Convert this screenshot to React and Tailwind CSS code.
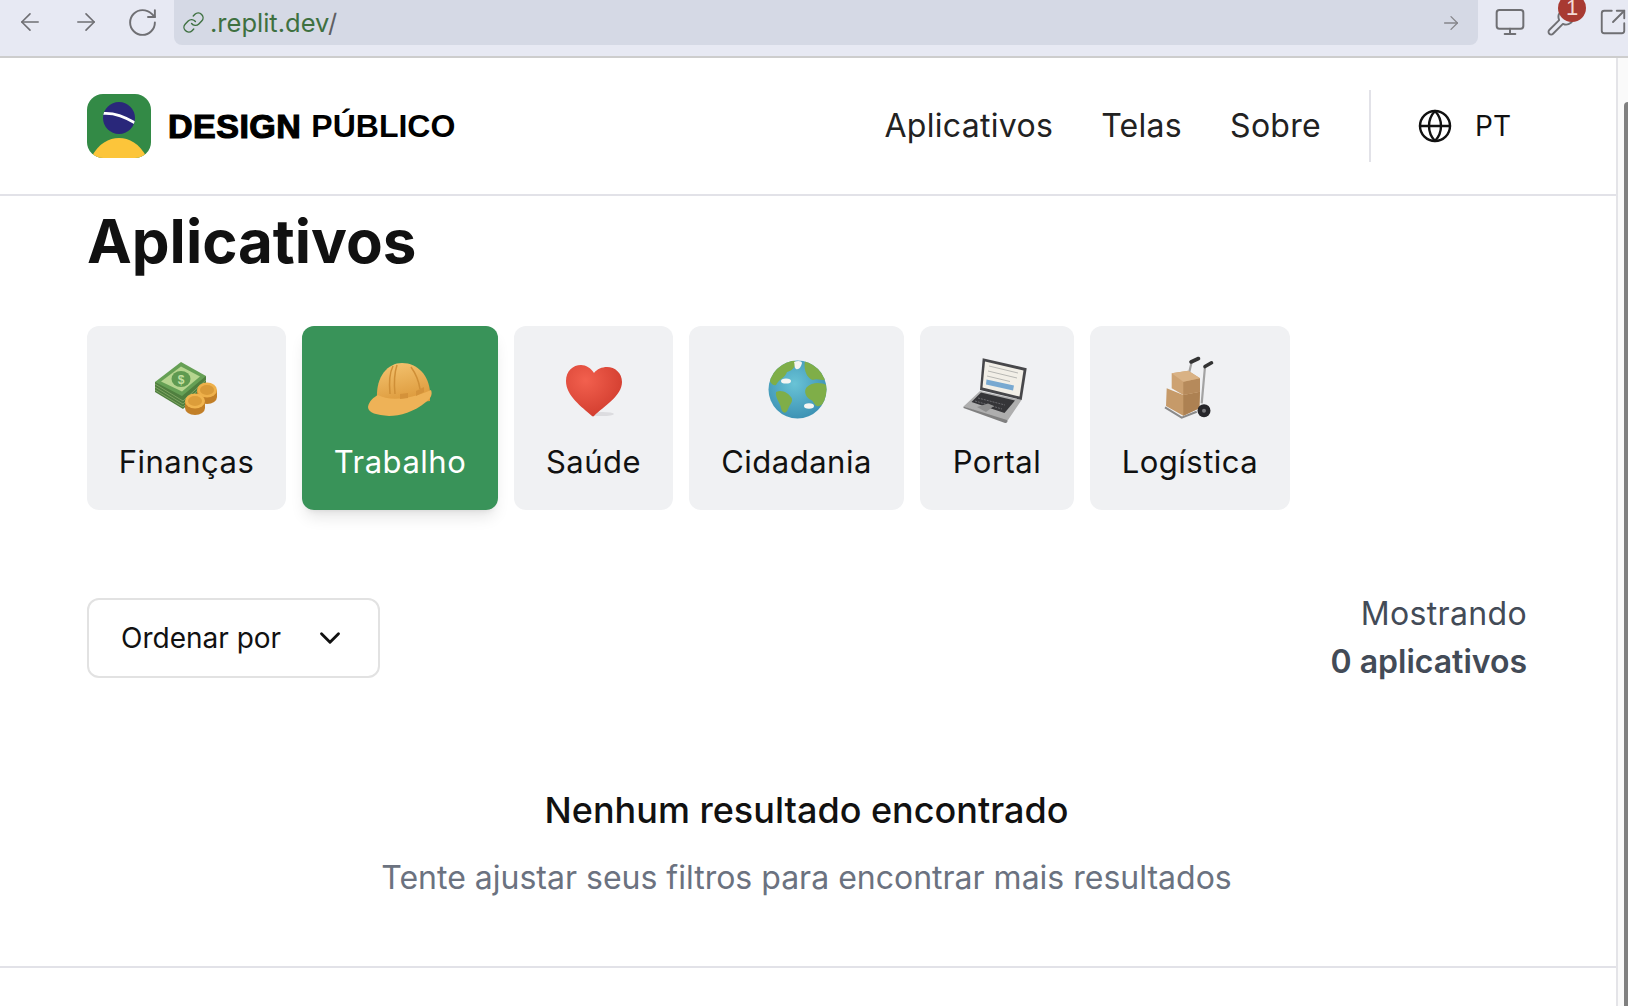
import { ArrowLeft, ArrowRight, RotateCw, Link, Monitor, Wrench, SquareArrowOutUpRight, Globe, ChevronDown } from "lucide-react";

const inter = "font-['Inter',sans-serif]";

function BrazilLogo() {
  return (
    <svg width="64" height="64" viewBox="0 0 64 64" className="shrink-0">
      <defs>
        <clipPath id="logoClip">
          <rect width="64" height="64" rx="16" />
        </clipPath>
        <clipPath id="ballClip">
          <circle cx="32" cy="24" r="16" />
        </clipPath>
      </defs>
      <g clipPath="url(#logoClip)">
        <rect width="64" height="64" fill="#338a46" />
        <circle cx="32" cy="24" r="16" fill="#29277a" />
        <path d="M15 19.5 C24 18.5 37 22 49 29.5" stroke="#fff" strokeWidth="2.8" fill="none" clipPath="url(#ballClip)" />
        <path d="M2 68 C10 50 21 44 32 44 C43 44 54 50 62 68 Z" fill="#fcc53a" />
      </g>
    </svg>
  );
}

function MoneyIcon() {
  return (
    <svg width="72" height="72" viewBox="0 0 72 72">
      <path d="M4 28 L4 38 L32 55 L55 34 L55 22 Z" fill="#4f7f3f" />
      <path d="M4 30 L32 47 L55 26 M4 33 L32 50 L55 29 M4 36 L32 53 L55 32" stroke="#7ea262" strokeWidth="1" fill="none" />
      <path d="M30 8 L55 22 L31 42 L4 28 Z" fill="#66a055" />
      <path d="M30 12.5 L49 22.5 L31 37.5 L10 27.5 Z" fill="#b6d58f" />
      <ellipse cx="30" cy="25" rx="9.5" ry="8" fill="#5f9a50" />
      <text x="30" y="29.5" fontSize="12" fontWeight="700" textAnchor="middle" fill="#c5e0a2" fontFamily="Liberation Sans, sans-serif">$</text>
      <path d="M46 36 v7 a10 7 0 0 0 20 0 v-7 Z" fill="#c27f27" />
      <ellipse cx="56" cy="36" rx="10" ry="7.5" fill="#eeb04a" />
      <ellipse cx="56" cy="36" rx="7" ry="5" fill="#d99a38" />
      <path d="M34 47 v7 a10 7 0 0 0 20 0 v-7 Z" fill="#c27f27" />
      <ellipse cx="44" cy="47" rx="10" ry="7.5" fill="#f0b44e" />
      <ellipse cx="44" cy="47" rx="7" ry="5" fill="#dc9d3a" />
    </svg>
  );
}

function HelmetIcon() {
  return (
    <svg width="72" height="72" viewBox="0 0 72 72">
      <defs>
        <linearGradient id="helmetDome" x1="0" y1="0" x2="0.3" y2="1">
          <stop offset="0" stopColor="#f5c572" />
          <stop offset="1" stopColor="#dd9a3c" />
        </linearGradient>
      </defs>
      <path d="M13 44 C12 22 24 9 38 9 C54 9 65 22 66 38 L66 47 L40 50 Z" fill="url(#helmetDome)" />
      <path d="M4 53 C5 47 10 43 14 41 C24 47 46 46 67 36 C69 41 66 45 62 48 C50 58 36 62 25 62 C13 61 4 59 4 53 Z" fill="#eeb257" />
      <path d="M29 12 C25 20 25 30 26 40 M33 11 C30 20 30 30 31 40 M47 13 C52 20 55 28 56 35" stroke="#cf8f37" strokeWidth="1.5" fill="none" />
      <path d="M36 40 L44 39 L44 44 L36 45 Z M52 37 L60 33 L60 38 L52 42 Z" fill="#d4923a" />
    </svg>
  );
}

function HeartIcon() {
  return (
    <svg width="72" height="72" viewBox="0 0 72 72">
      <defs>
        <radialGradient id="heartFill" cx="0.35" cy="0.3" r="0.8">
          <stop offset="0" stopColor="#f2604e" />
          <stop offset="1" stopColor="#cf3a2c" />
        </radialGradient>
      </defs>
      <ellipse cx="44" cy="60" rx="12" ry="2" fill="#dcdcdf" />
      <path d="M34 62 C24 53 8 42 8 27 C8 17 15 11 23 11 C28 11 33 14 36 19 C39 15 44 13 49 13 C57 13 64 19 64 28 C64 42 46 52 36 62 C35.5 62.5 34.5 62.5 34 62 Z" fill="url(#heartFill)" />
    </svg>
  );
}

function GlobeIcon() {
  return (
    <svg width="72" height="72" viewBox="0 0 72 72">
      <defs>
        <radialGradient id="sea" cx="0.45" cy="0.4" r="0.65">
          <stop offset="0" stopColor="#69c3d6" />
          <stop offset="1" stopColor="#3a8fb2" />
        </radialGradient>
        <clipPath id="globeClip">
          <circle cx="36.5" cy="35.5" r="29" />
        </clipPath>
      </defs>
      <circle cx="36.5" cy="35.5" r="29" fill="url(#sea)" />
      <g clipPath="url(#globeClip)">
        <path d="M8 24 C12 10 24 5 34 7 C36 12 31 17 26 18 C24 24 18 25 15 31 C12 32 9 29 8 24 Z" fill="#7fae48" />
        <path d="M15 38 C21 35 27 39 30 43 C33 47 29 50 27 55 C25 61 21 59 20 54 C19 48 14 44 15 38 Z" fill="#7fae48" />
        <path d="M44 7 C54 8 62 16 67 26 C61 27 56 24 52 26 C47 25 42 17 44 7 Z" fill="#7fae48" />
        <path d="M46 33 C51 28 61 28 67 32 C67 42 65 50 58 52 C54 54 53 47 50 46 C45 44 42 37 46 33 Z" fill="#7fae48" />
      </g>
      <path d="M33 8 C37 6 41 7 41 9 C40 13 38 16 35 15 C33 13 34 11 33 8 Z" fill="#f5f5f2" />
      <ellipse cx="25" cy="27" rx="5" ry="2.6" fill="#f5f5f2" />
      <ellipse cx="48" cy="52" rx="5" ry="2.8" fill="#f5f5f2" />
    </svg>
  );
}

function LaptopIcon() {
  return (
    <svg width="72" height="72" viewBox="0 0 72 72">
      <path d="M2.5 52.5 L19 37 L60.5 46 L46 67.5 C45 68.5 44 68 43 67.5 Z" fill="#aeaeae" />
      <path d="M2.5 52.5 L2.5 54 L44 69 C45 69 46 68.5 46.5 67.5 L46 66 Z" fill="#808080" />
      <path d="M21.7 4.3 L65.7 14.3 L60.7 46 L19 36 Z" fill="#47474a" />
      <path d="M24 7.5 L62.5 16.5 L58.5 42.5 L21.5 33.5 Z" fill="#f2efe7" />
      <path d="M28 12 L57 19 M27 17 L56 24 M26 22 L49 27.5" stroke="#b8b8b4" strokeWidth="1" fill="none" />
      <path d="M25.5 25.5 L53 31.5 L52 36.5 L25 30.5 Z" fill="#78a9d1" />
      <path d="M20 38.5 L54 46.5 L43.5 59 L10.5 48 Z" fill="#353538" />
      <path d="M17 44 L44 51 M14 47 L41 55" stroke="#77777b" strokeWidth="0.8" strokeDasharray="2 1" fill="none" />
      <path d="M16 53 L27 49.5 L33 52 L25 58 Z" fill="#8f8f8f" />
    </svg>
  );
}

function TrolleyIcon() {
  return (
    <svg width="72" height="72" viewBox="0 0 72 72">
      <path d="M51 12.7 L47.7 49.3 M37.7 7.7 L35.3 18" stroke="#a3a3a3" strokeWidth="2.2" fill="none" />
      <path d="M37 8 L44.5 4.5 M51 12.5 L57.5 8.8" stroke="#333" strokeWidth="3.6" strokeLinecap="round" fill="none" />
      <path d="M11 53.3 L27.7 63.7 L42.7 57.7" stroke="#8a8a8a" strokeWidth="2" fill="none" />
      <path d="M12.7 34.3 L29.3 41 L46 37.7 L45.3 54.3 L29.3 61.7 L12 52 Z" fill="#c69a69" />
      <path d="M29.3 41 L46 37.7 L45.3 54.3 L29.3 61.7 Z" fill="#ad8152" />
      <path d="M17.7 19.3 L34.3 16.7 L46 24.3 L46 37.7 L29.3 41 L17.7 34.3 Z" fill="#cda272" />
      <path d="M29.3 27.7 L46 24.3 L46 37.7 L29.3 41 Z" fill="#b68a5b" />
      <path d="M17.7 19.3 L34.3 16.7 L46 24.3 L29.3 27.7 Z" fill="#d9b285" />
      <circle cx="50" cy="56.7" r="6.5" fill="#26262a" />
      <circle cx="50" cy="56.7" r="2" fill="#77777a" />
    </svg>
  );
}

const categories = [
  { label: "Finanças", icon: <MoneyIcon />, width: "w-[199px]" },
  { label: "Trabalho", icon: <HelmetIcon />, width: "w-[196px]", active: true },
  { label: "Saúde", icon: <HeartIcon />, width: "w-[159px]" },
  { label: "Cidadania", icon: <GlobeIcon />, width: "w-[215px]" },
  { label: "Portal", icon: <LaptopIcon />, width: "w-[154px]" },
  { label: "Logística", icon: <TrolleyIcon />, width: "w-[200px]" },
];

function BrowserBar() {
  return (
    <div className="relative flex h-[58px] items-start border-b-2 border-[#cdcdcd] bg-[#e7e9f3] text-[#6f6f73]">
      <div className="flex h-[44px] w-[174px] shrink-0 items-center pl-[16px]">
        <ArrowLeft size={28} strokeWidth={1.4} />
        <ArrowRight size={28} strokeWidth={1.4} className="ml-[28px]" />
        <RotateCw size={33} strokeWidth={1.4} className="ml-[26px]" />
      </div>
      <div className="flex h-[45px] flex-1 items-center rounded-b-[8px] bg-[#d5d9e5] pl-[8px] pr-[16px]">
        <Link size={23} strokeWidth={1.5} className="text-[#3e7040]" />
        <span className={`${inter} ml-[5px] text-[25.5px] leading-none text-[#3e7040]`}>
          .replit.dev<span className="text-[#5f5f63]">/</span>
        </span>
        <ArrowRight size={22} strokeWidth={1.4} className="ml-auto text-[#85858a]" />
      </div>
      <div className="flex h-[44px] w-[150px] shrink-0 items-center pl-[16px]">
        <Monitor size={32} strokeWidth={1.5} />
        <Wrench size={30} strokeWidth={1.5} className="ml-[20px]" />
        <SquareArrowOutUpRight size={30} strokeWidth={1.5} className="ml-[22px]" />
      </div>
      {/* extension badge */}
      <div className="absolute left-[1558px] top-[-6px] flex h-[28px] w-[28px] items-center justify-center rounded-full bg-[#a83a32] text-[22px] leading-none text-[#f3d9d5] font-['Liberation_Sans',sans-serif]">
        1
      </div>
    </div>
  );
}

function Header() {
  return (
    <header className="flex h-[138px] shrink-0 items-center border-b-2 border-[#e2e2e8] pl-[87px] pr-[90px]">
      <BrazilLogo />
      <span className="ml-[17px] font-['Liberation_Sans',sans-serif] text-[34px] font-bold leading-none tracking-[0.5px] text-black [-webkit-text-stroke:1.2px_#000]">
        DESIGN
      </span>
      <span className="ml-[10px] font-['Liberation_Sans',sans-serif] text-[32px] font-bold leading-none text-black">
        PÚBLICO
      </span>
      <nav className={`${inter} ml-auto flex items-center gap-[48px] text-[32px] tracking-[0.3px] text-[#222]`}>
        <span>Aplicativos</span>
        <span>Telas</span>
        <span>Sobre</span>
      </nav>
      <div className="ml-[48px] h-[72px] w-[2px] bg-[#e2e2e8]" />
      <Globe size={36} strokeWidth={1.6} className="ml-[46px] text-[#111]" />
      <span className={`${inter} ml-[22px] mr-[15px] text-[28px] text-[#111]`}>PT</span>
    </header>
  );
}

export default function App() {
  return (
    <div className={`${inter} flex h-screen flex-col overflow-hidden bg-white`}>
      <BrowserBar />
      <div className="flex min-h-0 flex-1">
        <div className="flex min-w-0 flex-1 flex-col">
          <Header />
          <main className="pl-[87px] pr-[89px] pt-[13px]">
            <h1 className="text-[60px] font-bold leading-[64px] text-[#111]">Aplicativos</h1>

            <div className="mt-[53px] flex gap-[16px]">
              {categories.map((c) => (
                <div
                  key={c.label}
                  className={`${c.width} ${
                    c.active
                      ? "flex h-[184px] flex-col items-center rounded-[12px] bg-[#399359] pt-[28px] text-white shadow-lg"
                      : "flex h-[184px] flex-col items-center rounded-[12px] bg-[#f0f1f3] pt-[28px] text-[#111]"
                  }`}
                >
                  {c.icon}
                  <span className="mt-[16px] text-[31px] leading-[40px] tracking-[0.5px]">{c.label}</span>
                </div>
              ))}
            </div>

            <div className="mt-[80px] flex items-center justify-between">
              <button className="flex h-[80px] w-[293px] items-center justify-between rounded-[12px] border-2 border-[#e2e2e2] bg-white pl-[32px] pr-[31px] text-[28px] text-[#111]">
                Ordenar por
                <ChevronDown size={34} strokeWidth={2} />
              </button>
              <div className="text-right text-[32px] leading-[48px] text-[#434b57]">
                <div className="tracking-[0.35px]">Mostrando</div>
                <div className="font-semibold">0 aplicativos</div>
              </div>
            </div>

            <div className="mt-[96px] flex flex-col items-center pr-[1px]">
              <h2 className="text-[36px] font-medium leading-[56px] text-[#111]">Nenhum resultado encontrado</h2>
              <p className="mt-[12px] text-[32px] leading-[56px] text-[#6b7280]">
                Tente ajustar seus filtros para encontrar mais resultados
              </p>
            </div>
          </main>
          <div className="mt-[60px] h-[2px] bg-[#e2e2e8]" />
        </div>

        {/* scrollbar */}
        <div className="flex w-[12px] shrink-0 justify-end border-l-2 border-[#e4e4e8] bg-[#fafafa] pt-[44px]">
          <div className="w-[4px] rounded-tl-[4px] bg-[#808080]" />
        </div>
      </div>
    </div>
  );
}
